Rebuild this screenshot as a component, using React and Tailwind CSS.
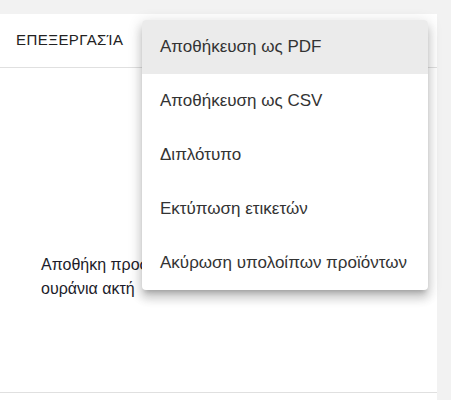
import React from 'react';

const menuItems = [
  'Αποθήκευση ως PDF',
  'Αποθήκευση ως CSV',
  'Διπλότυπο',
  'Εκτύπωση ετικετών',
  'Ακύρωση υπολοίπων προϊόντων',
];

const App = () => {
  return (
    <div
      className="relative min-h-[400px] w-full overflow-hidden bg-[#f2f2f2] pt-[14px]"
      style={{ fontFamily: '"Liberation Sans", Arial, sans-serif' }}
    >
      {/* Card */}
      <div className="w-[437px] bg-white">
        <div className="flex h-[54px] items-center border-b border-[#e0e0e0] px-4">
          <span className="text-[15px] uppercase tracking-[0.03em] text-[#222]">ΕΠΕΞΕΡΓΑΣΊΑ</span>
        </div>
        <div className="flex h-[325px] items-center border-b border-[#e0e0e0] pl-[41px] pt-[94px]">
          <p className="text-[16px] leading-6 text-[#1c1c2a]">
            Αποθήκη προσωρινής φύλαξης
            <br />
            ουράνια ακτή
          </p>
        </div>
        <div className="h-[20px]" />
      </div>

      {/* Dropdown menu */}
      <ul className="absolute left-[142px] top-[20px] w-[286px] rounded-[4px] bg-white shadow-[0_5px_5px_-3px_rgba(0,0,0,0.2),0_8px_10px_1px_rgba(0,0,0,0.14),0_3px_14px_2px_rgba(0,0,0,0.12)]">
        {menuItems.map((item, i) => (
          <li
            key={item}
            className={`flex h-[54px] items-center px-[18px] text-[17px] text-[#333] ${i === 0 ? 'rounded-t-[4px] bg-[#ebebeb]' : ''}`}
          >
            {item}
          </li>
        ))}
      </ul>
    </div>
  );
};

export default App;
